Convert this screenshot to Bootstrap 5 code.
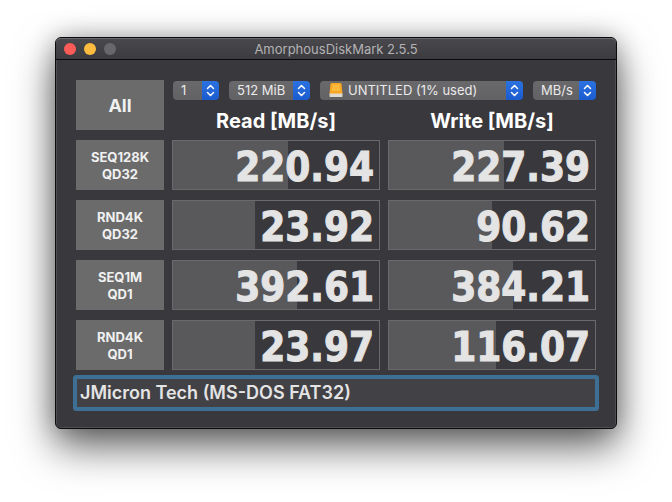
<!DOCTYPE html>
<html lang="en">
<head>
<meta charset="utf-8">
<meta name="viewport" content="width=device-width, initial-scale=1">
<title>AmorphousDiskMark 2.5.5</title>
<link href="https://cdn.jsdelivr.net/npm/bootstrap@5.3.0/dist/css/bootstrap.min.css" rel="stylesheet">
<style>
body { background: #fff; font-family: Inter, "Liberation Sans", sans-serif; padding: 37px 55px 73px; overflow-x: hidden; }
.app-window { background: #39383c; border: 1px solid #0b0b0c; border-radius: 6px; box-shadow: inset 0 0 0 1px #4f4e52, 0 18px 40px rgba(0,0,0,.6), 0 0 24px rgba(0,0,0,.25); }
.title-bar { height: 22px; background: linear-gradient(#49484c, #3c3b3f); border-bottom: 1px solid #0b0b0c; border-radius: 5px 5px 0 0; box-shadow: inset 0 1px 0 #6a696d; padding: 0 8px; gap: 8px; }
.window-title { font-size: 13px; line-height: 22px; color: #b3b2b4; }
.light { width: 12px; height: 12px; border: 0; padding: 0; border-radius: 50%; background: #68676b; }
.light-close { background: #fc5b57; }
.light-min { background: #fdbc40; }
.app-body { padding: 20px 20px 17px; }
.bench-grid { display: grid; grid-template-columns: 88px 1fr 1fr; gap: 10px 8px; }
.span-two { grid-column: span 2; }
.btn-test { min-height: 50px; background: #6b6b6c; color: #f0f0f0; border: 0; border-radius: 0; padding: 2px 0 0; font-size: 13px; line-height: 17px; font-weight: 700; }
.btn-test:hover { background: #777778; color: #fff; }
.btn-all { font-size: 18px; font-weight: 700; padding: 0; }
.pick-row { gap: 10px; padding: 1px 0 0 1px; }
.pick { height: 19px; min-height: 19px; border: 0; border-radius: 4px; padding: 0 22px 0 8px; font-size: 13px; line-height: 19px; color: #eaeaea; background: url("data:image/svg+xml,%3Csvg xmlns='http://www.w3.org/2000/svg' width='17' height='19'%3E%3Cpath d='M5.5 7.5l3-3 3 3M5.5 11.5l3 3 3-3' fill='none' stroke='%23fff' stroke-width='1.5' stroke-linecap='round' stroke-linejoin='round'/%3E%3C/svg%3E") right center / 17px 19px no-repeat, linear-gradient(#2c72e0, #1a5cd0) right center / 17px 19px no-repeat, linear-gradient(#69686b, #626164); }
.pick-count { width: 46px; }
.pick-size { width: 81px; }
.pick-unit { width: 63px; }
.pick-drive { padding-left: 28px; }
.drive-icon { position: absolute; left: 8px; top: 1px; }
.col-title { font-size: 20px; line-height: 18px; font-weight: 700; color: #fff; }
.result { height: 50px; border: 1px solid #6a6a6c; background: #39383c; }
.result-fill { position: absolute; inset: 0 auto 0 0; background: #59595b; }
.result-value { font-family: "DejaVu Sans Condensed", "DejaVu Sans", sans-serif; font-weight: 700; font-size: 40px; line-height: 50px; color: #e4e4e5; padding: 1px 5px 0 0; -webkit-text-stroke: 1px #e4e4e5; }
.device { height: 28px; border: 0; border-radius: 0; color: #e4e4e5; font-size: 18px; line-height: 28px; font-weight: 600; padding: 0 3px; }
.device, .device:focus { box-shadow: none; background: #424145; color: #e4e4e5; }
.device-row { padding: 9px 1px 4px; }
.device-ring { border-radius: 1px; box-shadow: 0 0 0 4px #3e6f95; }
</style>
</head>
<body>
<main class="app-window">
  <header class="title-bar d-flex align-items-center position-relative">
    <button class="light light-close" type="button" aria-label="Close"></button>
    <button class="light light-min" type="button" aria-label="Minimize"></button>
    <button class="light" type="button" aria-label="Zoom" disabled></button>
    <h1 class="window-title position-absolute start-0 end-0 text-center m-0 fw-normal pe-none">AmorphousDiskMark 2.5.5</h1>
  </header>
  <div class="app-body">
    <div class="bench-grid">
      <button class="btn btn-test btn-all" type="button">All</button>
      <div class="span-two d-flex flex-column justify-content-between">
        <div class="d-flex pick-row">
          <select class="form-select pick pick-count" aria-label="Test count"><option>1</option></select>
          <select class="form-select pick pick-size" aria-label="Test size"><option>512 MiB</option></select>
          <div class="position-relative flex-grow-1">
            <select class="form-select pick pick-drive" aria-label="Drive"><option>UNTITLED (1% used)</option></select>
            <svg class="drive-icon pe-none" width="16" height="16" viewBox="0 0 16 16" aria-hidden="true"><path d="M3.500 1h9q.8 0 1 .8L14.500 12h-13L2.500 1.800q.2-.8 1-.8z" fill="#f5a623"/><path d="M4.500 2.500h7l.8 6.500H3.700z" fill="#fbb93c"/><path d="M1.500 11.500h13v2.800q0 .7-.7.700H2.200q-.7 0-.7-.7z" fill="#dedad3"/></svg>
          </div>
          <select class="form-select pick pick-unit" aria-label="Unit"><option>MB/s</option></select>
        </div>
        <div class="d-flex gap-2 text-center">
          <h2 class="col-title flex-fill w-50 m-0">Read [MB/s]</h2>
          <h2 class="col-title flex-fill w-50 m-0">Write [MB/s]</h2>
        </div>
      </div>

      <button class="btn btn-test" type="button">SEQ128K<br>QD32</button>
      <div class="result position-relative"><div class="result-fill" style="width:56%"></div><div class="result-value position-relative text-end">220.94</div></div>
      <div class="result position-relative"><div class="result-fill" style="width:56%"></div><div class="result-value position-relative text-end">227.39</div></div>

      <button class="btn btn-test" type="button">RND4K<br>QD32</button>
      <div class="result position-relative"><div class="result-fill" style="width:40%"></div><div class="result-value position-relative text-end">23.92</div></div>
      <div class="result position-relative"><div class="result-fill" style="width:50%"></div><div class="result-value position-relative text-end">90.62</div></div>

      <button class="btn btn-test" type="button">SEQ1M<br>QD1</button>
      <div class="result position-relative"><div class="result-fill" style="width:60%"></div><div class="result-value position-relative text-end">392.61</div></div>
      <div class="result position-relative"><div class="result-fill" style="width:60%"></div><div class="result-value position-relative text-end">384.21</div></div>

      <button class="btn btn-test" type="button">RND4K<br>QD1</button>
      <div class="result position-relative"><div class="result-fill" style="width:40%"></div><div class="result-value position-relative text-end">23.97</div></div>
      <div class="result position-relative"><div class="result-fill" style="width:52%"></div><div class="result-value position-relative text-end">116.07</div></div>
    </div>
    <div class="device-row">
      <div class="device-ring"><input class="form-control device" type="text" aria-label="Device" value="JMicron Tech (MS-DOS FAT32)"></div>
    </div>
  </div>
</main>
<script src="https://cdn.jsdelivr.net/npm/bootstrap@5.3.0/dist/js/bootstrap.bundle.min.js"></script>
</body>
</html>
